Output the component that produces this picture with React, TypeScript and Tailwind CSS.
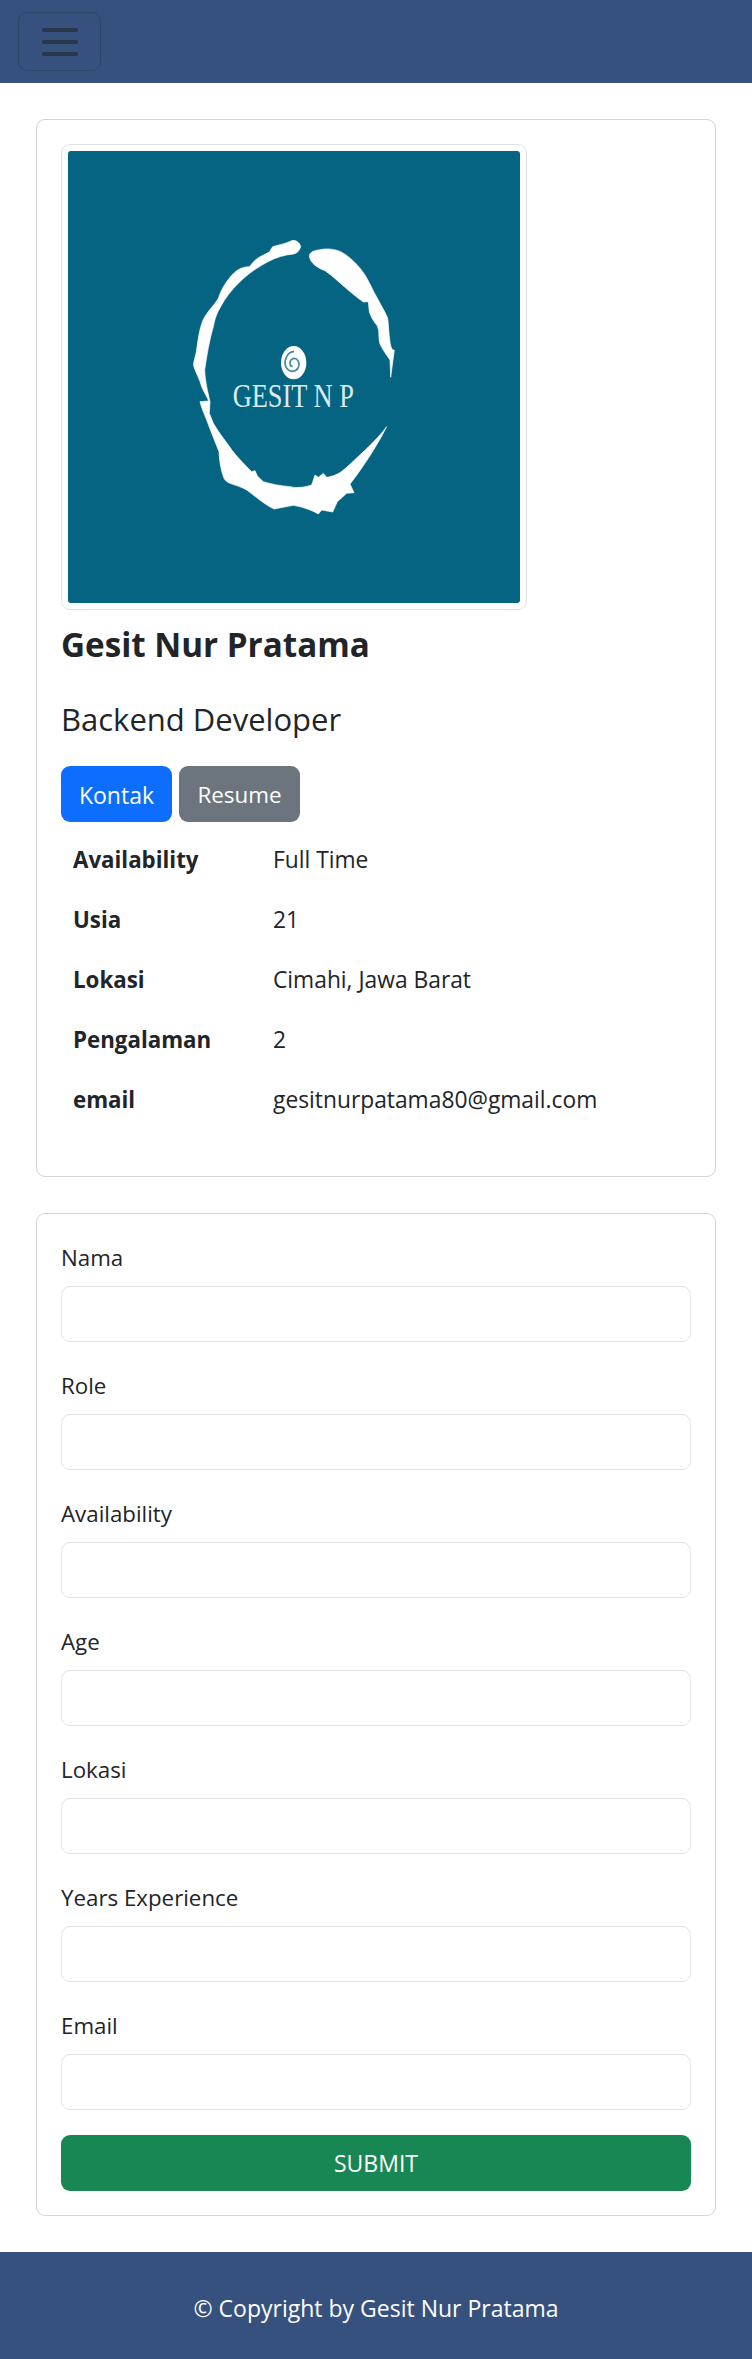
const profile = [
  ["Availability", "Full Time"],
  ["Usia", "21"],
  ["Lokasi", "Cimahi, Jawa Barat"],
  ["Pengalaman", "2"],
  ["email", "gesitnurpatama80@gmail.com"],
];

const fields = ["Nama", "Role", "Availability", "Age", "Lokasi", "Years Experience", "Email"];

function Logo() {
  return (
    <svg viewBox="-246 -147 1356 1356" className="block h-[452px] w-[452px] rounded-[3px] bg-[#056482]">
      <g fill="#fff" stroke="#fff" strokeWidth="2" strokeLinejoin="round">
        <path d="M452 140C450 128 436 118 425 122C410 130 385 135 368 140L358 156C340 166 320 172 305 192L298 200C275 200 255 212 240 232C225 250 212 272 205 295C190 320 170 335 157 365C146 395 143 430 139 455C135 475 130 485 131 498C138 520 150 540 155 560C160 575 172 590 176 603L150 605C155 625 162 640 170 660C185 700 195 725 207 755C208 780 212 810 222 835C232 855 260 852 290 870C320 892 345 915 372 927L430 916C455 920 485 930 505 942L515 930L548 936L562 905L590 880L612 878L600 852C630 815 680 740 710 680C680 720 640 755 590 802C570 820 555 828 530 832L520 820L505 832L495 825L485 855C465 862 440 865 420 860C395 858 365 853 340 845L322 828L315 812L305 815C285 795 255 765 240 742C220 715 205 695 190 670L178 640L180 605L172 570C168 550 165 530 164 510C170 470 178 420 190 380C195 355 200 340 212 320C225 295 245 270 265 250C285 230 310 210 335 196C360 180 385 170 410 165C425 162 445 165 452 140Z" />
        <path d="M478 168C478 158 490 152 505 150C525 145 550 145 572 155C600 170 625 195 645 225C660 250 670 275 685 300C695 320 708 340 713 355C716 375 716 400 720 425C722 440 726 452 733 450L722 532L720 480C710 465 698 450 690 432C684 415 690 395 682 378C672 365 662 350 658 335L655 305L640 306C620 292 600 275 585 262C565 245 545 225 525 212C505 205 480 190 478 168Z" />
      </g>
      <ellipse cx="431" cy="488" rx="38" ry="50" fill="#fff" />
      <path
        d="M428 500C418 498 416 482 428 476C442 472 452 488 444 504C434 520 412 516 406 496C402 476 414 456 432 454"
        fill="none"
        stroke="#056482"
        strokeWidth="5"
        opacity="0.75"
      />
      <text
        x="248"
        y="620"
        fontSize="104"
        fill="#dcebef"
        fontFamily="'Liberation Serif', serif"
        textLength="364"
        lengthAdjust="spacingAndGlyphs"
      >
        GESIT N P
      </text>
    </svg>
  );
}

export default function App() {
  return (
    <div className="min-h-[2359px] bg-white font-['Open_Sans',sans-serif] text-[23px] leading-[36px] text-[#212529]">
      <nav className="flex h-[83px] items-center bg-[#36517d] px-[18px]">
        <button className="flex h-[59px] w-[83px] flex-col items-center justify-center gap-[8px] rounded-[9px] border border-[#2f4569]">
          <span className="block h-[4px] w-[36px] rounded bg-[#29364a]" />
          <span className="block h-[4px] w-[36px] rounded bg-[#29364a]" />
          <span className="block h-[4px] w-[36px] rounded bg-[#29364a]" />
        </button>
      </nav>

      <main className="flex flex-col gap-[36px] px-[36px] py-[36px]">
        <section className="h-[1058px] rounded-[9px] border border-[#d3d4d5] px-[24px] pt-[24px]">
          <div className="w-fit rounded-[9px] border border-[#dee2e6] p-[6px]">
            <Logo />
          </div>
          <h3 className="mt-[13px] text-[33.2px] leading-[44px] font-bold">Gesit Nur Pratama</h3>
          <h4 className="mt-[30px] text-[31px] leading-[44px]">Backend Developer</h4>
          <div className="mt-[25px] flex gap-[7px]">
            <button className="h-[56px] w-[111px] rounded-[9px] bg-[#0d6efd] pt-[2px] text-white">Kontak</button>
            <button className="h-[56px] w-[121px] rounded-[9px] bg-[#6c757d] pt-[2px] text-[22.4px] text-white">
              Resume
            </button>
          </div>
          <div className="mt-[8px] grid grid-cols-[200px_1fr] auto-rows-[60px] items-center pl-[12px] text-[22.8px]">
            {profile.map(([label, value]) => (
              <div key={label} className="contents">
                <span className="text-[22.3px] font-bold">{label}</span>
                <span>{value}</span>
              </div>
            ))}
          </div>
        </section>

        <section className="rounded-[9px] border border-[#d3d4d5] p-[24px]">
          <form className="flex flex-col gap-[24px]">
            {fields.map((field) => (
              <label key={field} className="block">
                <span className="block text-[22.3px] leading-[40px]">{field}</span>
                <input className="mt-[8px] block h-[56px] w-full rounded-[9px] border border-[#e2e4e7] bg-white" />
              </label>
            ))}
            <button
              type="button"
              className="mt-px h-[56px] w-full rounded-[9px] bg-[#198754] text-white"
            >
              SUBMIT
            </button>
          </form>
        </section>
      </main>

      <footer className="flex h-[107px] items-center justify-center bg-[#36517d] pt-[4px] text-white">
        © Copyright by Gesit Nur Pratama
      </footer>
    </div>
  );
}
